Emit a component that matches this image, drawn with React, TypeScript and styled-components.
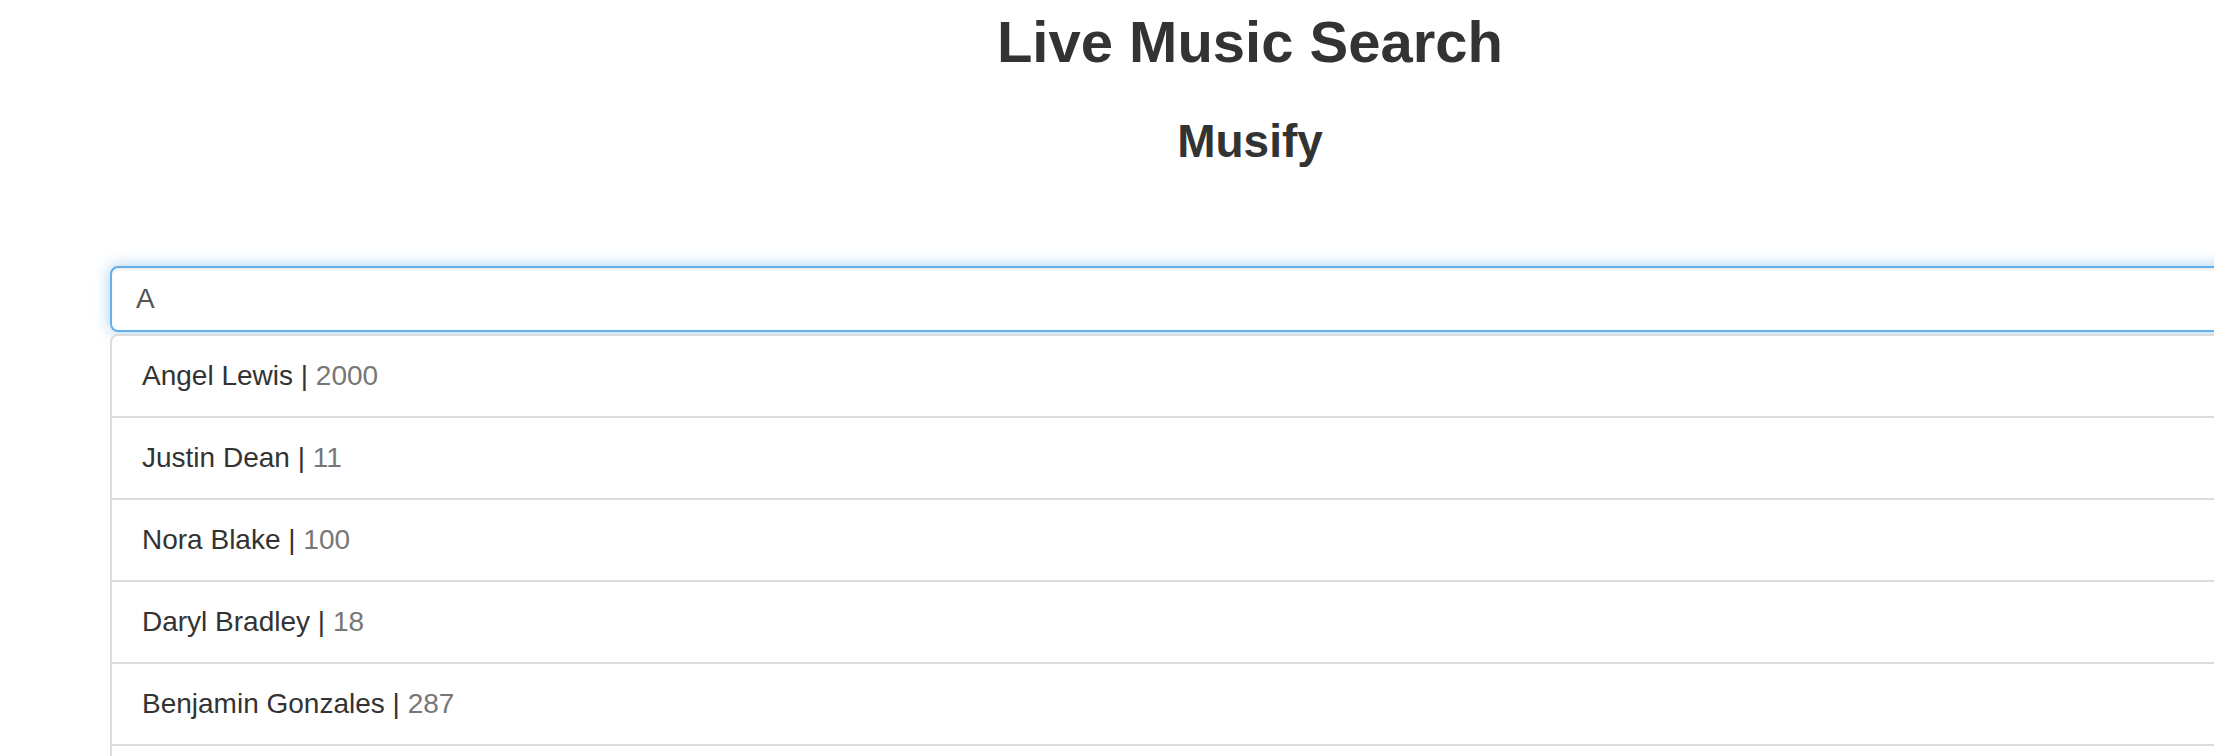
import React from "react";
import styled, { createGlobalStyle } from "styled-components";

const GlobalStyle = createGlobalStyle`
  html, body {
    margin: 0;
    padding: 0;
    background: #fff;
    overflow: hidden;
  }
  body {
    font-family: "Liberation Sans", Arial, Helvetica, sans-serif;
    color: #333;
  }
`;

const Page = styled.div`
  padding: 10px 0 0 110px;
  width: 2280px;
`;

const Header = styled.header`
  display: flex;
  flex-direction: column;
  align-items: center;
`;

const Title = styled.h1`
  margin: 0;
  font-size: 58px;
  line-height: 64px;
  font-weight: 700;
  color: #333;
`;

const Subtitle = styled.h2`
  margin: 42px 0 0;
  font-size: 46px;
  line-height: 51px;
  font-weight: 700;
  color: #333;
`;

const SearchInput = styled.input`
  display: block;
  box-sizing: border-box;
  width: 100%;
  height: 66px;
  margin-top: 99px;
  padding: 0 24px;
  font-family: "Liberation Sans", Arial, sans-serif;
  font-size: 28px;
  color: #555;
  background: #fff;
  border: 2px solid #66afe9;
  border-radius: 8px;
  outline: none;
  box-shadow: inset 0 2px 2px rgba(0, 0, 0, 0.075),
    0 0 16px rgba(102, 175, 233, 0.6);
`;

const List = styled.ul`
  list-style: none;
  margin: 2px 0 0;
  padding: 0;
`;

const Item = styled.li`
  box-sizing: border-box;
  padding: 20px 30px;
  line-height: 40px;
  font-size: 28px;
  color: #333;
  border: 2px solid #ddd;
  margin-bottom: -2px;
  background: #fff;

  &:first-child {
    border-top-left-radius: 8px;
    border-top-right-radius: 8px;
  }
`;

const Count = styled.span`
  color: #777;
`;

const results = [
  { name: "Angel Lewis", count: 2000 },
  { name: "Justin Dean", count: 11 },
  { name: "Nora Blake", count: 100 },
  { name: "Daryl Bradley", count: 18 },
  { name: "Benjamin Gonzales", count: 287 },
];

export default function App() {
  return (
    <>
      <GlobalStyle />
      <Page>
        <Header>
          <Title>Live Music Search</Title>
          <Subtitle>Musify</Subtitle>
        </Header>
        <SearchInput defaultValue="A" />
        <List>
          {results.map((r) => (
            <Item key={r.name}>
              {r.name} | <Count>{r.count}</Count>
            </Item>
          ))}
          <Item aria-hidden="true" />
        </List>
      </Page>
    </>
  );
}
